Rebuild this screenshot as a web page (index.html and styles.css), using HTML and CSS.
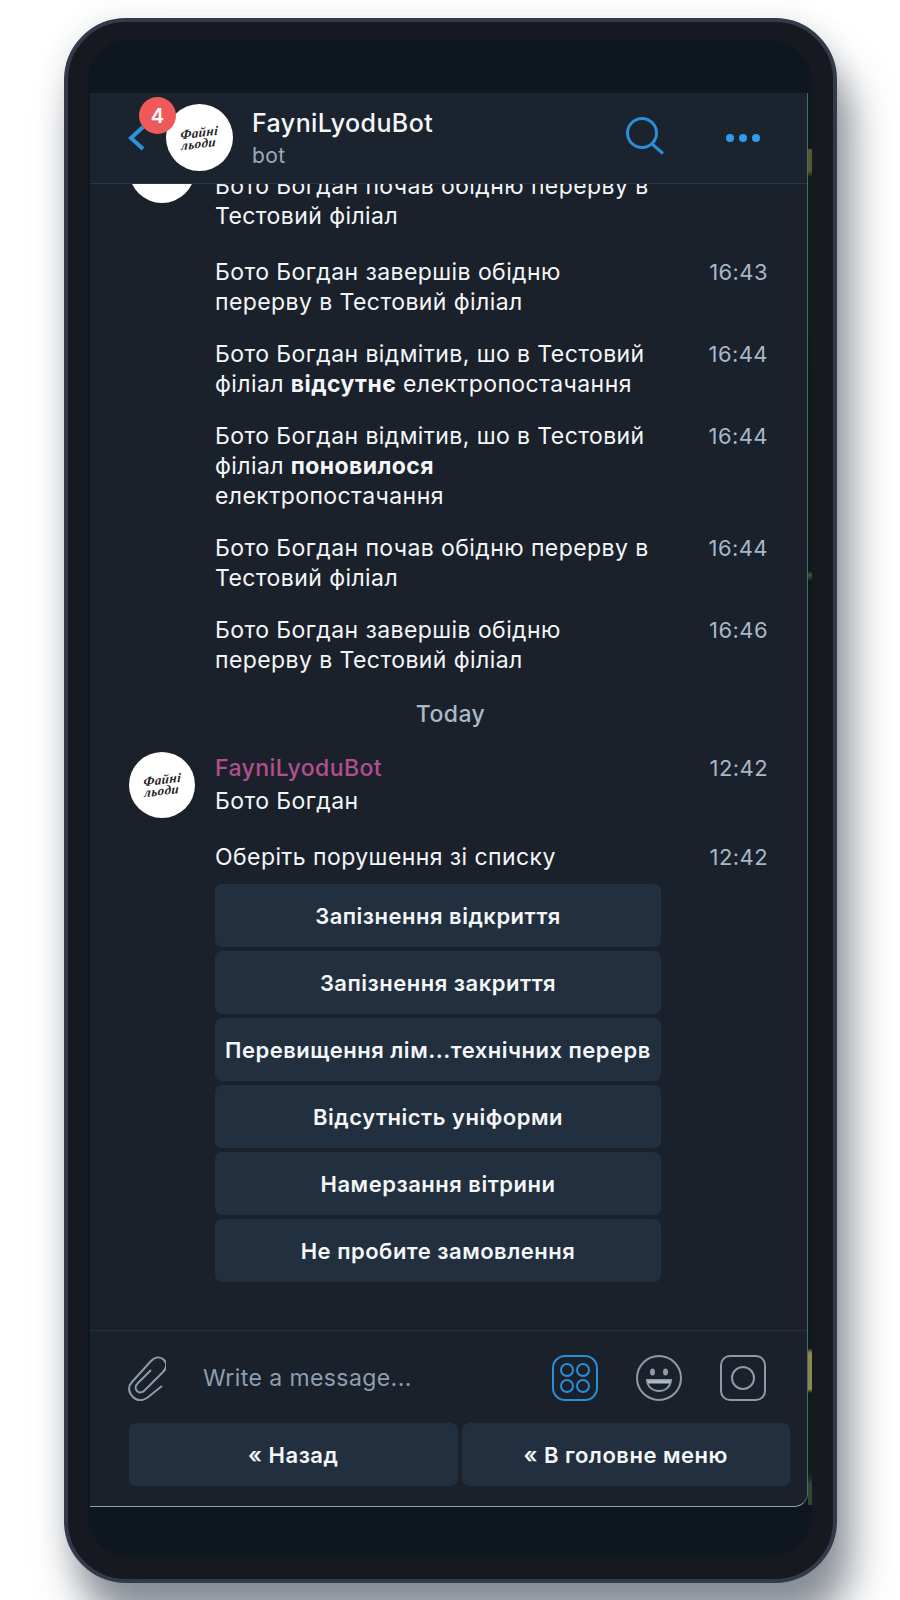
FILE: index.html
```html
<!DOCTYPE html>
<html lang="en">
<head>
    <meta charset="UTF-8">
    <meta name="viewport" content="width=device-width, initial-scale=1.0">
    <title>FayniLyoduBot</title>
    <link rel="stylesheet" href="styles.css">
</head>
<body>
    <div class="phone">
        <div class="screen">
            <div class="chat">
                <header class="topbar">
                    <svg class="back" width="18" height="28" viewBox="0 0 18 28"><path d="M15 3 3 14l12 11"/></svg>
                    <div class="avatar avatar-head">
                        <span class="logo">Файні<br>льоди</span>
                        <span class="badge">4</span>
                    </div>
                    <div class="title">
                        <div class="title-name">FayniLyoduBot</div>
                        <div class="title-sub">bot</div>
                    </div>
                    <svg class="search" width="42" height="42" viewBox="0 0 42 42"><circle cx="17" cy="17" r="14.500"/><path d="m27 28 11 9.500"/></svg>
                    <div class="dots"><span></span><span></span><span></span></div>
                </header>

                <main class="messages">
                    <div class="group">
                        <div class="avatar"><span class="logo">Файні<br>льоди</span></div>
                        <div class="group-body">
                            <div class="msg msg-first">
                                <div class="msg-text"><div class="sender">FayniLyoduBot</div>Бото Богдан почав обідню перерву в<br>Тестовий філіал</div>
                            </div>
                            <div class="msg">
                                <div class="msg-text">Бото Богдан завершів обідню<br>перерву в Тестовий філіал</div>
                                <div class="time">16:43</div>
                            </div>
                            <div class="msg">
                                <div class="msg-text">Бото Богдан відмітив, шо в Тестовий<br>філіал <b>відсутнє</b> електропостачання</div>
                                <div class="time">16:44</div>
                            </div>
                            <div class="msg">
                                <div class="msg-text">Бото Богдан відмітив, шо в Тестовий<br>філіал <b>поновилося</b><br>електропостачання</div>
                                <div class="time">16:44</div>
                            </div>
                            <div class="msg">
                                <div class="msg-text">Бото Богдан почав обідню перерву в<br>Тестовий філіал</div>
                                <div class="time">16:44</div>
                            </div>
                            <div class="msg">
                                <div class="msg-text">Бото Богдан завершів обідню<br>перерву в Тестовий філіал</div>
                                <div class="time">16:46</div>
                            </div>
                        </div>
                    </div>

                    <div class="day">Today</div>

                    <div class="group">
                        <div class="avatar"><span class="logo">Файні<br>льоди</span></div>
                        <div class="group-body">
                            <div class="msg">
                                <div class="msg-text">
                                    <div class="sender">FayniLyoduBot</div>
                                    Бото Богдан
                                </div>
                                <div class="time">12:42</div>
                            </div>
                            <div class="msg msg-menu">
                                <div class="msg-text">Оберіть порушення зі списку</div>
                                <div class="time">12:42</div>
                            </div>
                            <div class="inline-kb">
                                <button class="kb-btn">Запізнення відкриття</button>
                                <button class="kb-btn">Запізнення закриття</button>
                                <button class="kb-btn">Перевищення лім...технічних перерв</button>
                                <button class="kb-btn">Відсутність уніформи</button>
                                <button class="kb-btn">Намерзання вітрини</button>
                                <button class="kb-btn">Не пробите замовлення</button>
                            </div>
                        </div>
                    </div>
                </main>

                <footer class="composer">
                    <div class="input-row">
                        <svg class="icon clip" width="40" height="46" viewBox="0 0 40 46"><path d="M36 31 21 43c-5 3-10 3-14-1-5-5-5-11-1-15L25 6c5-5 10-4 13-1s3 8-1 12L19 35c-3 3-6 3-8 1s-2-5 1-8l13-13"/></svg>
                        <div class="placeholder">Write a message...</div>
                        <svg class="icon icon-active" width="46" height="46" viewBox="0 0 46 46"><rect x="1" y="1" width="44" height="44" rx="12"/><circle cx="15" cy="15" r="6"/><circle cx="31" cy="15" r="6"/><circle cx="15" cy="31" r="6"/><circle cx="31" cy="31" r="6"/></svg>
                        <svg class="icon" width="46" height="46" viewBox="0 0 46 46"><circle cx="23" cy="23" r="22"/><ellipse class="dot" cx="16.500" cy="17" rx="2.500" ry="3.500"/><ellipse class="dot" cx="29.500" cy="17" rx="2.500" ry="3.500"/><path class="mouth" d="M11 25h24c-.5 7-5.500 11-12 11s-11.500-4-12-11Z"/><path class="teeth" d="M11.500 25.500h23l-.5 3h-22Z"/></svg>
                        <svg class="icon" width="46" height="46" viewBox="0 0 46 46"><rect x="1" y="1" width="44" height="44" rx="9"/><circle cx="23" cy="23" r="11"/></svg>
                    </div>
                    <div class="reply-kb">
                        <button class="kb-btn">« Назад</button>
                        <button class="kb-btn">« В головне меню</button>
                    </div>
                </footer>
            </div>
        </div>
    </div>
</body>
</html>
```

FILE: styles.css
```css
* {
    box-sizing: border-box;
}
html, body {
    height: 1600px;
    overflow: hidden;
}
body {
    margin: 0;
    background-color: #fff;
    font-family: Inter, 'Noto Sans', sans-serif;
    display: flex;
    justify-content: center;
}
.phone {
    width: 773px;
    height: 1565px;
    margin-top: 18px;
    margin-left: 1px;
    padding: 18px 21px 22px 20px;
    flex: none;
    background-color: #16191f;
    border: 4px solid #333a4a;
    border-radius: 62px;
    box-shadow: 14px 40px 40px rgba(55, 65, 80, 0.58), 0 0 28px rgba(60, 70, 90, 0.12);
}
.screen {
    height: 100%;
    padding: 53px 4px 50px 2px;
    /* the thin strip of wallpaper showing down the right edge */
    background: linear-gradient(#0a1a1a 0, #0a1a1a 55px, #4f5c2c 57px, #4f5c2c 78px, #0c2018 84px, #0a1a1a 478px, #3f5c32 482px, #0a1a1a 488px, #0a1a1a 1255px, #8a8a50 1260px, #8a8a50 1296px, #0a1f1a 1300px, #0a1f1a 1380px, #2c4a30 1392px, #2c4a30 1412px) right 53px / 4px 1412px no-repeat, #0e1620;
    border-radius: 42px;
}
.chat {
    height: 100%;
    display: flex;
    flex-direction: column;
    background-color: #1a212b;
    color: #f4f6f8;
    border-right: 1px solid #58626c;
    border-bottom: 1px solid #9aa0a8;
    border-bottom-right-radius: 14px;
    font-size: 23px;
    letter-spacing: 0.42px;
    overflow: hidden;
}

/* top bar */
.topbar {
    height: 91px;
    flex: none;
    display: flex;
    align-items: center;
    padding-left: 39px;
    background-color: #1b242e;
    border-bottom: 1px solid #26384a;
}
.back {
    flex: none;
    margin-right: 20px;
    margin-left: -1px;
}
.back path {
    fill: none;
    stroke: #2a94e0;
    stroke-width: 4;
}
.avatar {
    position: relative;
    width: 66px;
    height: 66px;
    flex: none;
    display: flex;
    align-items: center;
    justify-content: center;
    background-color: #fff;
    border-radius: 50%;
}
.avatar-head {
    width: 67px;
    height: 67px;
    margin-top: -1px;
}
.logo {
    font-family: 'Liberation Serif', serif;
    font-style: italic;
    font-weight: 700;
    font-size: 13px;
    line-height: 11px;
    letter-spacing: 0.5px;
    text-align: center;
    color: #222;
    transform: rotate(-7deg) skewX(-10deg);
}
.badge {
    position: absolute;
    left: -27px;
    top: -7px;
    width: 37px;
    height: 37px;
    display: flex;
    align-items: center;
    justify-content: center;
    border-radius: 50%;
    background-color: #ee5a5a;
    color: #fff;
    font-size: 20px;
    font-weight: 600;
}
.title {
    flex: 1;
    margin-left: 19px;
    margin-top: 2px;
}
.title-name {
    font-size: 25px;
    font-weight: 500;
    line-height: 32px;
}
.title-sub {
    font-size: 21px;
    line-height: 32px;
    margin-top: 1px;
    color: #9aabc0;
}
.search {
    flex: none;
    margin-right: 59px;
    margin-top: -2px;
}
.search circle, .search path {
    fill: none;
    stroke: #2a8fd8;
    stroke-width: 3;
}
.dots {
    display: flex;
    gap: 5px;
    margin-right: 47px;
    margin-top: -1px;
}
.dots span {
    width: 8px;
    height: 8px;
    border-radius: 50%;
    background-color: #2d9cee;
}

/* messages */
.messages {
    flex: 1;
    min-height: 0;
    display: flex;
    flex-direction: column;
    justify-content: flex-end;
    padding: 0 39px 48px 39px;
    overflow: hidden;
}
.group {
    display: flex;
    flex: none;
    gap: 20px;
    align-items: flex-start;
}
.group-body {
    flex: 1;
    padding-top: 1px;
}
.msg {
    display: flex;
    justify-content: space-between;
    margin-bottom: 22px;
    line-height: 30px;
}
.msg:last-child {
    margin-bottom: 0;
}
.msg-first {
    margin-bottom: 26px;
}
.msg-text {
    width: 470px;
}
.msg-text b {
    font-weight: 700;
}
.msg-menu {
    margin-top: 26px;
    margin-bottom: 12px;
}
.sender {
    color: #b24f8c;
    font-weight: 500;
    margin-bottom: 3px;
}
.time {
    font-size: 22px;
    color: #a8b7c8;
}
.day {
    flex: none;
    margin: 24px 0 23px;
    padding-left: 4px;
    text-align: center;
    line-height: 30px;
    font-weight: 500;
    color: #aab8c8;
}

/* buttons */
.kb-btn {
    height: 63px;
    padding: 0;
    border: 0;
    border-radius: 7px;
    background-color: #212f3f;
    color: #f4f6f8;
    font-family: inherit;
    font-size: 22px;
    font-weight: 600;
    letter-spacing: 0.5px;
}
.inline-kb {
    width: 446px;
    display: flex;
    flex-direction: column;
    gap: 4px;
}

/* composer */
.composer {
    flex: none;
    padding: 24px 17px 20px 39px;
    border-top: 1px solid #26323f;
}
.input-row {
    display: flex;
    align-items: center;
    height: 46px;
    padding-right: 24px;
    gap: 38px;
}
.icon {
    flex: none;
}
.icon rect, .icon circle, .icon path {
    fill: none;
    stroke: #8f9aa8;
    stroke-width: 2;
}
.icon .dot {
    fill: #8f9aa8;
}
.icon .teeth {
    fill: #b4bbc4;
    stroke: none;
}
.icon-active rect, .icon-active circle {
    stroke: #2a8fd8;
}
.clip {
    margin-left: -3px;
    margin-right: -1px;
}
.placeholder {
    flex: 1;
    color: #8e9eb0;
}
.reply-kb {
    display: flex;
    gap: 4px;
    margin-top: 22px;
}
.reply-kb .kb-btn {
    flex: 1;
}
```
